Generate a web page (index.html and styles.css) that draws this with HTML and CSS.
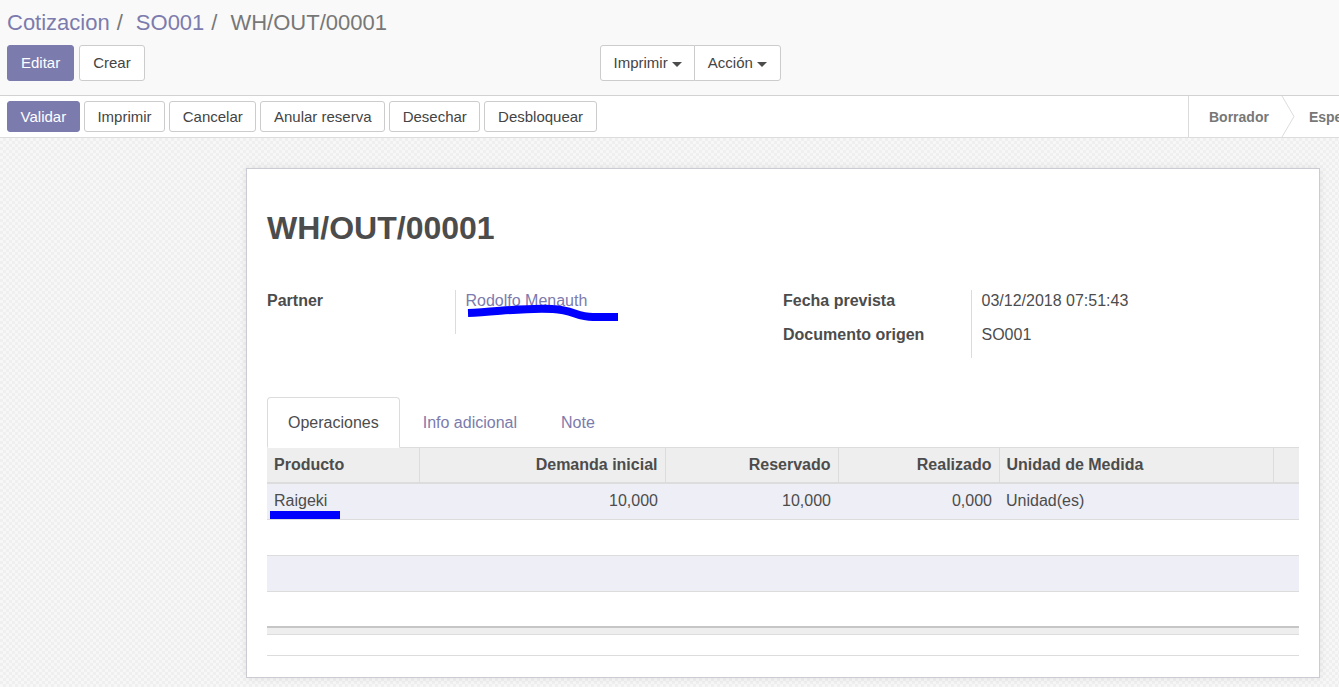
FILE: index.html
```html
<!DOCTYPE html>
<html lang="es">
<head>
<meta charset="utf-8">
<title>WH/OUT/00001</title>
<link rel="stylesheet" href="styles.css">
</head>
<body>
<div class="control-panel">
  <ol class="breadcrumb">
    <li class="crumb link">Cotizacion</li>
    <li class="sep">/</li>
    <li class="crumb link">SO001</li>
    <li class="sep">/</li>
    <li class="crumb current">WH/OUT/00001</li>
  </ol>
  <div class="cp-buttons">
    <div class="cp-left">
      <button class="btn btn-primary btn-lg">Editar</button>
      <button class="btn btn-lg">Crear</button>
    </div>
    <div class="btn-group">
      <button class="btn btn-lg">Imprimir <span class="caret"></span></button>
      <button class="btn btn-lg">Acción <span class="caret"></span></button>
    </div>
  </div>
</div>

<div class="statusbar">
  <div class="status-actions">
    <button class="btn btn-sm btn-primary">Validar</button>
    <button class="btn btn-sm">Imprimir</button>
    <button class="btn btn-sm">Cancelar</button>
    <button class="btn btn-sm">Anular reserva</button>
    <button class="btn btn-sm">Desechar</button>
    <button class="btn btn-sm">Desbloquear</button>
  </div>
  <div class="status-states">
    <span class="state">Borrador</span>
    <svg class="chevron" width="14" height="41" viewBox="0 0 14 41"><polyline points="1,0 13,20.5 1,41" fill="none" stroke="#dcdcdc" stroke-width="1"/></svg>
    <span class="state">Espe</span>
  </div>
</div>

<div class="sheet-bg">
  <div class="sheet">
    <h1 class="title">WH/OUT/00001</h1>
    <div class="groups">
      <table class="group">
        <tr class="tall">
          <td class="label">Partner</td>
          <td class="value"><span class="scribble-wrap"><a class="link-text">Rodolfo Menauth</a><svg class="scribble s1" width="156" height="20" viewBox="0 0 156 20"><path d="M1 9 C 30 8, 60 3, 86 5 C 106 6, 110 13, 126 13 L 151 13" fill="none" stroke="#0000ff" stroke-width="8" stroke-linecap="butt"/></svg></span></td>
        </tr>
      </table>
      <table class="group">
        <tr>
          <td class="label">Fecha prevista</td>
          <td class="value">03/12/2018 07:51:43</td>
        </tr>
        <tr>
          <td class="label">Documento origen</td>
          <td class="value">SO001</td>
        </tr>
      </table>
    </div>

    <ul class="tabs">
      <li class="tab active">Operaciones</li>
      <li class="tab">Info adicional</li>
      <li class="tab">Note</li>
    </ul>

    <table class="list">
      <colgroup>
        <col style="width:152px"><col style="width:246px"><col style="width:173px"><col style="width:161px"><col style="width:274px"><col style="width:26px">
      </colgroup>
      <thead>
        <tr>
          <th>Producto</th>
          <th class="num">Demanda inicial</th>
          <th class="num">Reservado</th>
          <th class="num">Realizado</th>
          <th>Unidad de Medida</th>
          <th></th>
        </tr>
      </thead>
      <tbody>
        <tr class="odd">
          <td><span class="scribble-wrap">Raigeki<span class="scribble s2"></span></span></td>
          <td class="num">10,000</td>
          <td class="num">10,000</td>
          <td class="num">0,000</td>
          <td>Unidad(es)</td>
          <td></td>
        </tr>
        <tr><td colspan="6"></td></tr>
        <tr class="odd"><td colspan="6"></td></tr>
        <tr class="last"><td colspan="6"></td></tr>
      </tbody>
    </table>
    <div class="list-foot"></div>
    <div class="list-after"></div>
  </div>
</div>
</body>
</html>
```

FILE: styles.css
```css
* { box-sizing: border-box; }
html, body { margin: 0; padding: 0; }
body {
  font-family: "Liberation Sans", Arial, sans-serif;
  font-size: 16px;
  line-height: 22px;
  color: #4c4c4c;
  background: #f9f9f9;
  overflow: hidden;
  width: 1339px;
  height: 687px;
}

.control-panel {
  background: #f9f9f9;
  padding: 7px 7px 14px;
  border-bottom: 1px solid #d2d2d2;
}
.breadcrumb {
  list-style: none;
  margin: 0;
  padding: 0;
  display: flex;
  font-size: 22px;
  line-height: 31px;
  height: 31px;
}
.breadcrumb .link { color: #7c7bad; }
.breadcrumb .sep { color: #777; padding: 0 13px 0 7px; }
.breadcrumb .current { color: #777; }

.cp-buttons {
  margin-top: 7px;
  display: grid;
  grid-template-columns: 593px auto;
  justify-content: start;
}
.cp-left { display: flex; gap: 5px; }

.btn {
  font-family: inherit;
  font-size: 15px;
  color: #444;
  background: #fff;
  border: 1px solid #ccc;
  border-radius: 3px;
  height: 36px;
  padding: 0 13px;
  line-height: 22px;
  cursor: pointer;
  white-space: nowrap;
}
.btn-sm { height: 31px; padding: 0 12.6px; }
.btn-primary {
  background: #7c7bad;
  border-color: #7c7bad;
  color: #fff;
}
.btn-group { display: flex; }
.btn-group .btn { padding: 0 12.5px; }
.btn-group .btn:first-child { border-radius: 3px 0 0 3px; }
.btn-group .btn:last-child { border-radius: 0 3px 3px 0; margin-left: -1px; }
.caret {
  display: inline-block;
  width: 0; height: 0;
  border-top: 5px solid #4c4c4c;
  border-left: 5px solid transparent;
  border-right: 5px solid transparent;
  vertical-align: middle;
}

.statusbar {
  display: grid;
  grid-template-columns: 1181px 1fr;
  height: 42px;
  padding-left: 7px;
  background: #fff;
  border-bottom: 1px solid #dcdcdc;
  overflow: hidden;
}
.status-actions {
  display: flex;
  gap: 4px;
  align-items: center;
}
.status-states {
  display: flex;
  align-items: center;
  border-left: 1px solid #dcdcdc;
  white-space: nowrap;
  overflow: hidden;
}
.state {
  font-weight: bold;
  color: #777;
  font-size: 14px;
}
.state:first-child { padding-left: 20px; padding-right: 12px; }
.chevron { flex: none; display: block; }
.chevron + .state { padding-left: 14px; }

.sheet-bg {
  height: 550px;
  padding-top: 30px;
  background-color: #f3f3f3;
  background-image: repeating-conic-gradient(#efefef 0 25%, #f7f7f7 0 50%);
  background-size: 6px 6px;
}
.sheet {
  margin-left: 246px;
  width: 1074px;
  background: #fff;
  border: 1px solid #cbcbd3;
  box-shadow: 0 0 8px rgba(0, 0, 0, 0.08);
  padding: 20px 20px 21px;
}
.title {
  margin: 22px 0 0;
  font-size: 32px;
  line-height: 35px;
  font-weight: bold;
  color: #4c4c4c;
}
.groups {
  margin-top: 44px;
  display: grid;
  grid-template-columns: 1fr 1fr;
}
.group {
  border-collapse: collapse;
  align-self: start;
}
.group td { padding: 0 0 12px; vertical-align: top; }
.group tr.tall td { padding-bottom: 22px; }
.group .label {
  width: 188px;
  font-weight: bold;
  border-right: 1px solid #dcdcdc;
}
.group .value { padding-left: 10px; }
.link-text { color: #7c7bad; }

.scribble-wrap { position: relative; display: inline-block; }
.scribble { position: absolute; pointer-events: none; }
.s1 { left: 1px; top: 14px; }
.s2 {
  left: -4px;
  top: 21px;
  width: 70px;
  height: 8px;
  background: #0000ff;
}

.tabs {
  list-style: none;
  margin: 39px 0 0;
  padding: 0;
  display: flex;
  border-bottom: 1px solid #dcdcdc;
}
.tab {
  padding: 14px 20px 13px;
  margin-right: 2px;
  margin-bottom: -1px;
  border: 1px solid transparent;
  border-radius: 4px 4px 0 0;
  color: #7c7bad;
}
.tab.active {
  color: #4c4c4c;
  background: #fff;
  border-color: #dcdcdc #dcdcdc transparent;
}

.list {
  width: 1032px;
  border-collapse: collapse;
  table-layout: fixed;
}
.list th {
  height: 35px;
  background: #eee;
  font-weight: bold;
  text-align: left;
  padding: 0 7px;
  border-left: 1px solid #dcdcdc;
  border-bottom: 2px solid #dcdcdc;
  white-space: nowrap;
}
.list th:first-child { border-left: none; }
.list td {
  height: 36px;
  padding: 0 7px;
  border-bottom: 1px solid #dcdcdc;
  white-space: nowrap;
}
.list tr.last td { border-bottom: none; height: 35px; }
.list tr.odd td { background: #eeeef6; }
.list .num { text-align: right; }

.list-foot {
  height: 9px;
  background: #eee;
  border-top: 2px solid #c6c6c6;
  border-bottom: 1px solid #dcdcdc;
}
.list-after {
  height: 21px;
  border-bottom: 1px solid #dcdcdc;
}
```
